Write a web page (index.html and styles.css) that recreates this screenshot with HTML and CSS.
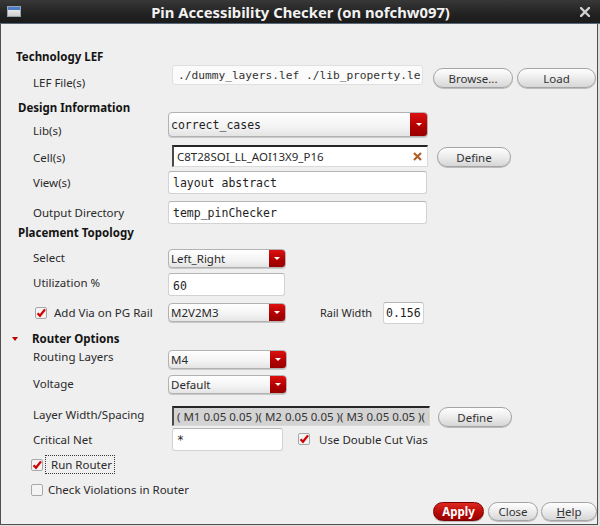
FILE: index.html
```html
<!DOCTYPE html>
<html>
<head>
<meta charset="utf-8">
<link rel="stylesheet" href="styles.css">
</head>
<body>
<div class="window">
  <div class="titlebar">
    <span class="wicon"></span>
    <span class="title">Pin Accessibility Checker (on nofchw097)</span>
    <svg class="wclose" width="10" height="10" viewBox="0 0 10 10"><path d="M1 1 L9 9 M9 1 L1 9" stroke="#cfcfcf" stroke-width="2.4" stroke-linecap="square"/></svg>
  </div>
  <div class="content">
    <div class="sec s1">Technology LEF</div>
    <div class="row r-lef">
      <span class="lbl">LEF File(s)</span>
      <div class="field mono lef">./dummy_layers.lef ./lib_property.le</div>
      <button class="btn browse">Browse...</button>
      <button class="btn load">Load</button>
    </div>

    <div class="sec s2">Design Information</div>
    <div class="row r-lib">
      <span class="lbl">Lib(s)</span>
      <div class="dd w-lib"><span class="ddtext mono">correct_cases</span><span class="ddbtn"></span></div>
    </div>
    <div class="row r-cell">
      <span class="lbl">Cell(s)</span>
      <div class="field inset w-cell"><span class="ftext">C8T28SOI_LL_AOI13X9_P16</span>
        <svg class="clr" width="9" height="9" viewBox="0 0 9 9"><path d="M1 1 L8 8 M8 1 L1 8" stroke="#b0602a" stroke-width="2.2"/></svg>
      </div>
      <button class="btn define">Define</button>
    </div>
    <div class="row r-view">
      <span class="lbl">View(s)</span>
      <div class="field mono w-wide">layout abstract</div>
    </div>
    <div class="row r-out">
      <span class="lbl">Output Directory</span>
      <div class="field mono w-wide">temp_pinChecker</div>
    </div>

    <div class="sec s3">Placement Topology</div>
    <div class="row r-sel">
      <span class="lbl">Select</span>
      <div class="dd w-small"><span class="ddtext">Left_Right</span><span class="ddbtn"></span></div>
    </div>
    <div class="row r-util">
      <span class="lbl">Utilization %</span>
      <div class="field mono w-util">60</div>
    </div>
    <div class="row r-pg">
      <svg class="cb" width="12" height="12" viewBox="0 0 12 12"><rect x="0.5" y="0.5" width="11" height="11" rx="1.5" fill="#f4f4f4" stroke="#a8a8a8"/><path d="M2.6 6.2 L5 8.8 L10 2.4" fill="none" stroke="#d40000" stroke-width="2.3"/></svg>
      <span class="cblbl pg">Add Via on PG Rail</span>
      <div class="dd w-small"><span class="ddtext">M2V2M3</span><span class="ddbtn"></span></div>
      <span class="rw">Rail Width</span>
      <div class="field mono w-rail">0.156</div>
    </div>

    <div class="sec s4"><span class="tri"></span>Router Options</div>
    <div class="row r-route">
      <span class="lbl">Routing Layers</span>
      <div class="dd w-small"><span class="ddtext">M4</span><span class="ddbtn"></span></div>
    </div>
    <div class="row r-volt">
      <span class="lbl">Voltage</span>
      <div class="dd w-small"><span class="ddtext">Default</span><span class="ddbtn"></span></div>
    </div>
    <div class="row r-layer">
      <span class="lbl">Layer Width/Spacing</span>
      <div class="field inset grey w-layer"><span class="ftext">( M1 0.05 0.05 )( M2 0.05 0.05 )( M3 0.05 0.05 )( M</span></div>
      <button class="btn define">Define</button>
    </div>
    <div class="row r-crit">
      <span class="lbl">Critical Net</span>
      <div class="field mono w-crit">*</div>
      <svg class="cb cb-dc" width="12" height="12" viewBox="0 0 12 12"><rect x="0.5" y="0.5" width="11" height="11" rx="1.5" fill="#f4f4f4" stroke="#a8a8a8"/><path d="M2.6 6.2 L5 8.8 L10 2.4" fill="none" stroke="#d40000" stroke-width="2.3"/></svg>
      <span class="cblbl dc">Use Double Cut Vias</span>
    </div>
    <div class="row r-run">
      <svg class="cb" width="12" height="12" viewBox="0 0 12 12"><rect x="0.5" y="0.5" width="11" height="11" rx="1.5" fill="#f4f4f4" stroke="#a8a8a8"/><path d="M2.6 6.2 L5 8.8 L10 2.4" fill="none" stroke="#d40000" stroke-width="2.3"/></svg>
      <span class="focus">Run Router</span>
    </div>
    <div class="row r-chk">
      <svg class="cb" width="12" height="12" viewBox="0 0 12 12"><rect x="0.5" y="0.5" width="11" height="11" rx="1.5" fill="#f4f4f4" stroke="#a8a8a8"/></svg>
      <span class="cblbl chk">Check Violations in Router</span>
    </div>

    <div class="btnrow">
      <button class="btn apply">Apply</button>
      <button class="btn close">Close</button>
      <button class="btn help"><u>H</u>elp</button>
    </div>
  </div>
</div>
</body>
</html>
```
FILE: styles.css
```css
* { box-sizing: border-box; margin: 0; padding: 0; }
html, body { width: 600px; height: 526px; overflow: hidden; background: #dedede; }
body {
  font-family: "Noto Sans", "Open Sans", sans-serif;
  font-size: 11.5px;
  color: #2a2a2a;
}
.window { width: 600px; height: 525px; display: flex; flex-direction: column; }

.titlebar {
  height: 24px;
  flex: none;
  display: flex;
  align-items: center;
  background: linear-gradient(#383838, #222 60%, #1b1b1b);
  border-bottom: 1px solid #56687a;
}
.wicon {
  width: 14px; height: 11px;
  margin-left: 7px;
  background: linear-gradient(#4a7cc8 0, #4a7cc8 3px, #e8e8e8 3px, #cfcfcf);
  border: 1px solid #9aa4ae;
  flex: none;
}
.title {
  flex: 1;
  text-align: center;
  color: #f2f2f2;
  font-weight: 700;
  font-size: 14.8px;
  line-height: 20px;
}
.wclose { margin-right: 10px; flex: none; }

.content {
  width: 598px;
  flex: 1;
  display: flex;
  flex-direction: column;
  background: #efefef;
  border: 1px solid #505050;
  border-top: 0;
}

.sec { font-weight: 700; line-height: 16px; height: 16px; color: #141414; flex: none; }
.s1 { margin-top: 25px; padding-left: 15px; }
.s2 { height: 12px; padding-left: 17px; }
.s3 { padding-left: 17px; }
.s4 { padding-left: 11px; display: flex; align-items: center; }
.tri {
  width: 0; height: 0;
  border-left: 3.5px solid transparent;
  border-right: 3.5px solid transparent;
  border-top: 4px solid #c00000;
  margin-right: 14px;
}

.row { display: flex; align-items: flex-start; padding-left: 32px; flex: none; }
.lbl { width: 135px; line-height: 16px; flex: none; white-space: nowrap; }
.mono { font-family: "DejaVu Sans Mono", "Liberation Mono", monospace; font-size: 11.5px; color: #1e1e1e; }

.field {
  background: #fff;
  border: 1px solid #d2d2d2;
  border-top-color: #b4b4b4;
  border-radius: 3px;
  padding-left: 4px;
  white-space: nowrap;
  overflow: hidden;
  display: flex;
  align-items: center;
  flex: none;
}
.inset {
  border-radius: 0;
  border: 1px solid #dadada;
  border-top: 2px solid #262626;
  border-left: 2px solid #4a4a4a;
  padding-left: 3px;
}
.grey { background: #d3d3d3; }
.ftext { flex: 1; overflow: hidden; white-space: nowrap; }

.dd {
  display: flex;
  flex: none;
  border: 1px solid #b2b2b2;
  border-radius: 4px;
  background: linear-gradient(#ffffff, #f3f3f3 60%, #e4e4e4);
  box-shadow: 0 1px 0 #c9c9c9;
  overflow: hidden;
}
.ddtext { flex: 1; align-self: center; padding-left: 2px; white-space: nowrap; }
.ddbtn {
  width: 16px;
  flex: none;
  display: flex;
  align-items: center;
  justify-content: center;
  background: linear-gradient(#dc1010, #b00000 60%, #980000);
}
.ddbtn::after {
  content: "";
  border-left: 3px solid transparent;
  border-right: 3px solid transparent;
  border-top: 3px solid #fff;
}

.btn {
  font-family: inherit;
  font-size: 11.5px;
  color: #333;
  height: 20px;
  border: 1px solid #a4a4a4;
  border-radius: 10px;
  background: linear-gradient(#fefefe, #ececec 50%, #d6d6d6);
  box-shadow: 0 1px 0 #bdbdbd;
  flex: none;
}

/* LEF row */
.r-lef { height: 35px; }
.r-lef .lbl { margin-top: 10px; }
.lef { margin-left: 4px; width: 251px; height: 20px; background: #fbfbfb; border-color: #e0e0e0; font-size: 11.2px; color: #333; padding-left: 5px; }
.browse { margin-left: 10px; margin-top: 3px; width: 80px; }
.load { margin-left: 4px; margin-top: 3px; width: 79px; }

/* Lib */
.r-lib { height: 33px; }
.r-lib .lbl { margin-top: 11px; }
.w-lib { width: 260px; height: 25px; }
.w-lib .ddbtn { width: 17px; }

/* Cell */
.r-cell { height: 26px; }
.r-cell .lbl { margin-top: 5px; }
.w-cell { margin-left: 4px; width: 256px; height: 22px; padding-right: 5px; }
.clr { flex: none; }
.define { margin-left: 9px; margin-top: 2px; width: 74px; }

/* View / Output */
.r-view { height: 30px; }
.r-view .lbl { margin-top: 4px; }
.r-out { height: 24px; }
.r-out .lbl { margin-top: 4px; }
.w-wide { width: 259px; height: 23px; }

/* Select */
.r-sel { height: 32px; }
.r-sel .lbl { margin-top: 9px; }
.r-sel .dd { margin-top: 8px; }
.w-small { width: 118px; height: 19px; }

/* Utilization */
.r-util { height: 29px; }
.r-util .lbl { margin-top: 2px; }
.w-util { width: 117px; height: 23px; padding-top: 3px; }

/* PG rail */
.r-pg { height: 29px; padding-left: 34px; }
.cb { flex: none; margin-top: 5px; }
.cblbl { line-height: 16px; white-space: nowrap; flex: none; }
.pg { margin-left: 7px; margin-top: 3px; width: 114px; }
.r-pg .dd { margin-top: 1px; }
.rw { margin-left: 34px; margin-top: 3px; line-height: 16px; width: 52px; font-size: 11px; white-space: nowrap; flex: none; }
.w-rail { margin-left: 11px; width: 41px; height: 22px; padding-left: 2px; }

/* Router */
.r-route { height: 28px; }
.r-route .lbl { margin-top: 2px; }
.r-route .dd { margin-top: 3px; width: 119px; }
.r-volt { height: 31px; }
.r-volt .lbl { margin-top: 1px; }
.r-volt .dd { width: 119px; }

.r-layer { height: 22px; }
.r-layer .lbl { margin-top: 1px; }
.w-layer { margin-left: 4px; width: 258px; height: 20px; color: #333; }
.r-layer .define { margin-left: 8px; margin-top: 1px; }

.r-crit { height: 27px; }
.r-crit .lbl { margin-top: 4px; }
.w-crit { margin-left: 4px; width: 111px; height: 23px; }
.cb-dc { margin-left: 15px; }
.dc { margin-left: 9px; margin-top: 4px; }

.r-run { height: 25px; padding-left: 30px; }
.r-run .cb { margin-top: 4px; }
.focus {
  margin-left: 2px;
  width: 70px;
  height: 19px;
  line-height: 17px;
  padding-left: 5px;
  border: 1px dotted #3a3a3a;
  white-space: nowrap;
}

.r-chk { height: 22px; padding-left: 30px; }
.r-chk .cb { margin-top: 4px; }
.chk { margin-left: 5px; margin-top: 2px; }

.btnrow {
  margin-top: auto;
  margin-bottom: 2px;
  display: flex;
  justify-content: flex-end;
  padding-right: 0;
  height: 20px;
}
.btnrow .btn { height: 19px; }
.apply {
  width: 51px;
  color: #fff;
  font-weight: 700;
  border-color: #7c0000;
  background: linear-gradient(#de2a20, #b80a06 55%, #9c0000);
}
.close { margin-left: 4px; width: 50px; }
.help { margin-left: 3px; width: 56px; }
.help u { text-decoration: underline; }
```
